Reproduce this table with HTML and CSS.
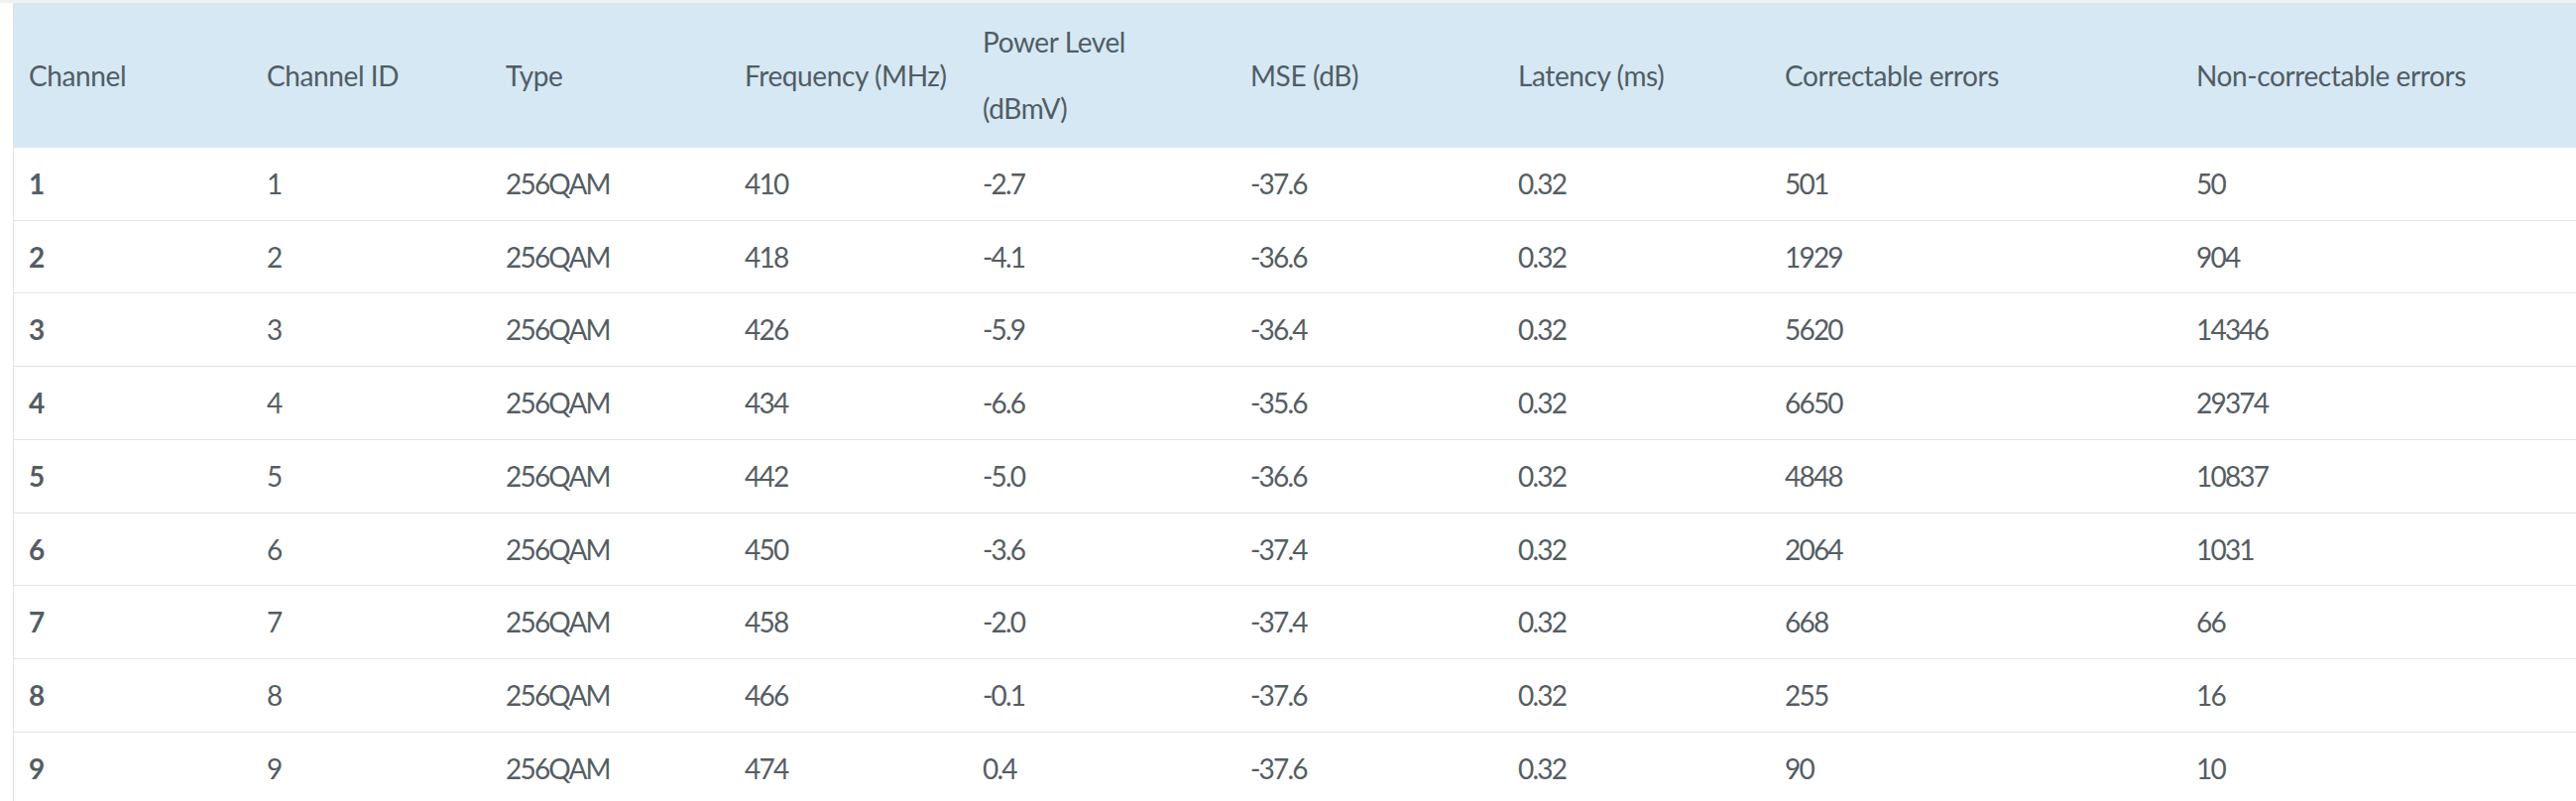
FILE: index.html
```html
<!DOCTYPE html>
<html>
<head>
<meta charset="utf-8">
<link rel="stylesheet" href="styles.css">
</head>
<body>
<div class="page">
<table class="channels">
<colgroup>
<col class="c1"><col class="c2"><col class="c3"><col class="c4"><col class="c5"><col class="c6"><col class="c7"><col class="c8"><col class="c9">
</colgroup>
<thead>
<tr>
<th>Channel</th>
<th>Channel ID</th>
<th>Type</th>
<th>Frequency (MHz)</th>
<th>Power Level<br>(dBmV)</th>
<th>MSE (dB)</th>
<th>Latency (ms)</th>
<th>Correctable errors</th>
<th>Non-correctable errors</th>
</tr>
</thead>
<tbody>
<tr><td class="ch">1</td><td>1</td><td>256QAM</td><td>410</td><td>-2.7</td><td>-37.6</td><td>0.32</td><td>501</td><td>50</td></tr>
<tr><td class="ch">2</td><td>2</td><td>256QAM</td><td>418</td><td>-4.1</td><td>-36.6</td><td>0.32</td><td>1929</td><td>904</td></tr>
<tr><td class="ch">3</td><td>3</td><td>256QAM</td><td>426</td><td>-5.9</td><td>-36.4</td><td>0.32</td><td>5620</td><td>14346</td></tr>
<tr><td class="ch">4</td><td>4</td><td>256QAM</td><td>434</td><td>-6.6</td><td>-35.6</td><td>0.32</td><td>6650</td><td>29374</td></tr>
<tr><td class="ch">5</td><td>5</td><td>256QAM</td><td>442</td><td>-5.0</td><td>-36.6</td><td>0.32</td><td>4848</td><td>10837</td></tr>
<tr><td class="ch">6</td><td>6</td><td>256QAM</td><td>450</td><td>-3.6</td><td>-37.4</td><td>0.32</td><td>2064</td><td>1031</td></tr>
<tr><td class="ch">7</td><td>7</td><td>256QAM</td><td>458</td><td>-2.0</td><td>-37.4</td><td>0.32</td><td>668</td><td>66</td></tr>
<tr><td class="ch">8</td><td>8</td><td>256QAM</td><td>466</td><td>-0.1</td><td>-37.6</td><td>0.32</td><td>255</td><td>16</td></tr>
<tr><td class="ch">9</td><td>9</td><td>256QAM</td><td>474</td><td>0.4</td><td>-37.6</td><td>0.32</td><td>90</td><td>10</td></tr>
</tbody>
</table>
</div>
</body>
</html>
```
FILE: styles.css
```css
html, body {
  margin: 0;
  padding: 0;
  overflow: hidden;
  background: #ffffff;
}

.page {
  border-top: 3px solid #f1f1ef;
  padding-left: 13px;
  font-family: Lato, "Open Sans", sans-serif;
  font-size: 28px;
  color: #545d63;
}

.channels {
  width: 2585px;
  table-layout: fixed;
  border-collapse: separate;
  border-spacing: 0;
  border-left: 1px solid #e2e2e2;
}

.c1 { width: 240px; }
.c2 { width: 241px; }
.c3 { width: 241px; }
.c4 { width: 240px; }
.c5 { width: 270px; }
.c6 { width: 270px; }
.c7 { width: 269px; }
.c8 { width: 415px; }
.c9 { width: auto; }

.channels th {
  background: #d5e8f4;
  text-align: left;
  font-weight: 400;
  color: #515c63;
  padding: 6px 15px;
  line-height: 67px;
  letter-spacing: -0.4px;
  vertical-align: middle;
  white-space: nowrap;
}

.channels td {
  padding: 15px 15px;
  line-height: 42.7px;
  letter-spacing: -1.8px;
  border-bottom: 1px solid #e3e3e3;
  white-space: nowrap;
}

.channels td.ch {
  font-weight: 700;
}
```
